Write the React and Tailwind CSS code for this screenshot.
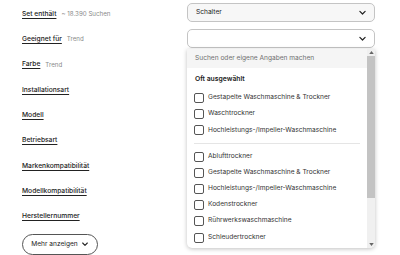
import React from 'react';

const labels = [
  { name: 'Set enthält', note: '~ 18.390 Suchen' },
  { name: 'Geeignet für', note: 'Trend' },
  { name: 'Farbe', note: 'Trend' },
  { name: 'Installationsart' },
  { name: 'Modell' },
  { name: 'Betriebsart' },
  { name: 'Markenkompatibilität' },
  { name: 'Modellkompatibilität' },
  { name: 'Herstellernummer' },
];

const frequent = [
  'Gestapelte Waschmaschine & Trockner',
  'Waschtrockner',
  'Hochleistungs-/Impeller-Waschmaschine',
];

const others = [
  'Ablufttrockner',
  'Gestapelte Waschmaschine & Trockner',
  'Hochleistungs-/Impeller-Waschmaschine',
  'Kodenstrockner',
  'Rührwerkswaschmaschine',
  'Schleudertrockner',
];

function Chevron({ className }) {
  return (
    <svg viewBox="0 0 12 12" className={className} fill="none" stroke="currentColor" strokeWidth="1.6" strokeLinecap="round" strokeLinejoin="round">
      <path d="M2.5 4.5 6 8l3.5-3.5" />
    </svg>
  );
}

function Option({ text }) {
  return (
    <div className="flex items-center h-[16.2px] pl-[7px]">
      <span className="w-[10px] h-[10px] rounded-[2px] border border-[#555] bg-white mr-[4px] shrink-0" />
      <span className="text-[6.6px] text-[#333] whitespace-nowrap">{text}</span>
    </div>
  );
}

export default function App() {
  return (
    <div
      className="w-[400px] h-[255px] overflow-hidden bg-white flex"
      style={{ fontFamily: 'Inter, "Noto Sans", sans-serif' }}
    >
      {/* left: filter names */}
      <div className="w-[187px] pl-[22px] pt-[1px] flex flex-col">
        {labels.map((l) => (
          <div key={l.name} className="h-[25.9px] flex items-center gap-[5px] whitespace-nowrap">
            <span className="text-[6.7px] font-medium text-[#222] underline underline-offset-[1.5px]">{l.name}</span>
            {l.note && <span className="text-[6.2px] text-[#8a8a8a]">{l.note}</span>}
          </div>
        ))}
        <div className="mt-[5px]">
          <button className="h-[21px] w-[76px] rounded-full border border-[#555] flex items-center justify-center gap-[3px] text-[6.6px] text-[#222]">
            Mehr anzeigen
            <Chevron className="w-[8px] h-[8px]" />
          </button>
        </div>
      </div>

      {/* right: selects */}
      <div className="w-[188px] pt-[3px] flex flex-col">
        <div className="h-[19px] rounded-[5px] border border-[#c4c4c4] bg-[#f7f7f7] flex items-center justify-between pl-[8px] pr-[7px]">
          <span className="text-[6.6px] text-[#222]">Schalter</span>
          <Chevron className="w-[9px] h-[9px] text-[#222]" />
        </div>
        <div className="mt-[7px] h-[19px] rounded-[5px] border border-[#c4c4c4] bg-white flex items-center justify-end pr-[7px]">
          <Chevron className="w-[9px] h-[9px] text-[#222]" />
        </div>

        <div className="mt-[1px] h-[199px] rounded-b-[5px] bg-white shadow-[0_1px_4px_rgba(0,0,0,0.25)] flex overflow-hidden">
          <div className="flex-1 flex flex-col">
            <div className="h-[19px] bg-[#f5f5f5] flex items-center pl-[8px]">
              <span className="text-[6.6px] text-[#707070]">Suchen oder eigene Angaben machen</span>
            </div>
            <div className="h-[22px] flex items-center pl-[8px]">
              <span className="text-[6.8px] font-semibold text-[#222]">Oft ausgewählt</span>
            </div>
            {frequent.map((t, i) => (
              <Option key={'f' + i} text={t} />
            ))}
            <div className="mx-[7px] my-[4.5px] border-t border-[#e5e5e5]" />
            {others.map((t, i) => (
              <Option key={'o' + i} text={t} />
            ))}
          </div>
          {/* scrollbar */}
          <div className="w-[8px] bg-[#f0f0f0] flex flex-col items-center">
            <span className="h-[7px] flex items-center text-[#666]">
              <svg viewBox="0 0 6 4" className="w-[5px] h-[3px]" fill="currentColor"><path d="M0 4 3 0l3 4z" /></svg>
            </span>
            <div className="w-full h-[142px] bg-[#c3c3c3]" />
            <div className="flex-1" />
            <span className="h-[7px] flex items-center text-[#666]">
              <svg viewBox="0 0 6 4" className="w-[5px] h-[3px]" fill="currentColor"><path d="M0 0h6L3 4z" /></svg>
            </span>
          </div>
        </div>
      </div>
    </div>
  );
}
